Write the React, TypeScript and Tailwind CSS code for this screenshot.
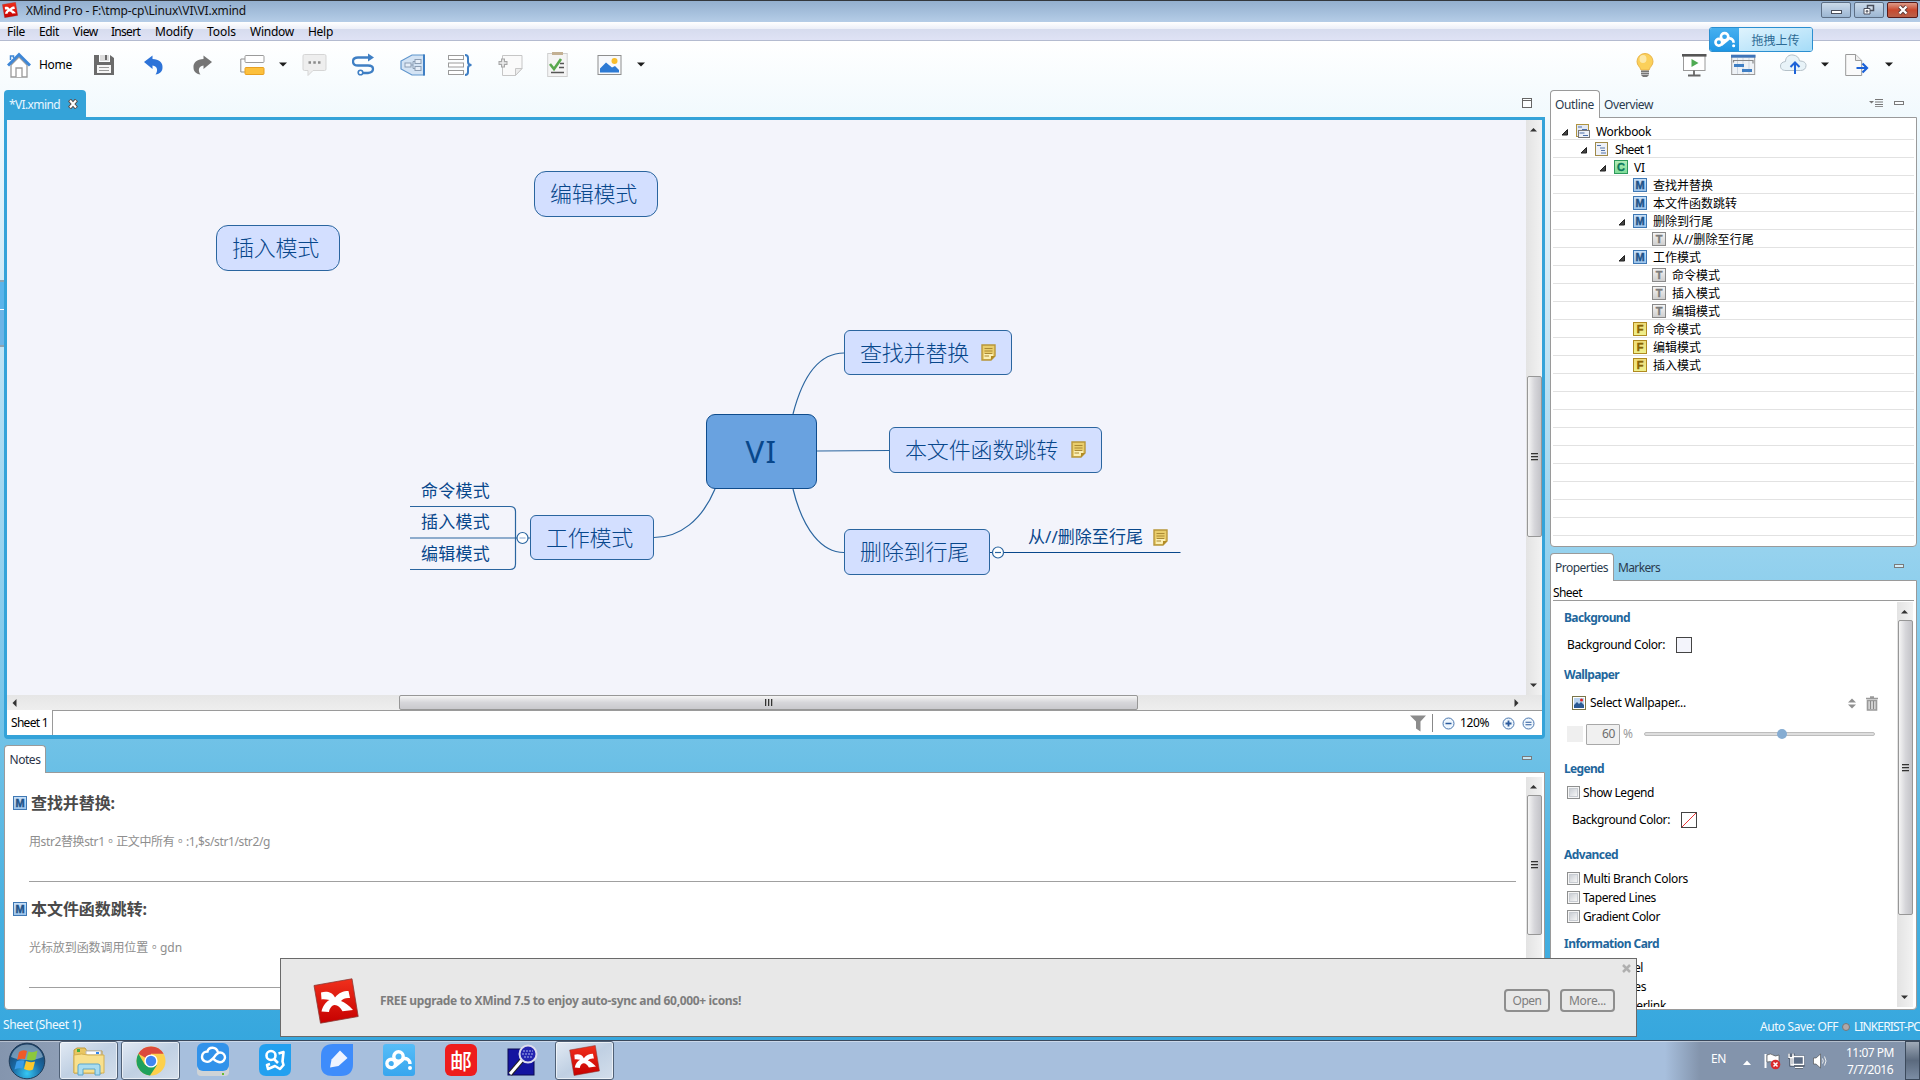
import React, { useLayoutEffect, useRef, useState } from 'react';

/* Text set to a given width: the letter spacing follows from the measured natural width. */
function Fit({ w, children, className = '' }: { w: number; children: string; className?: string }) {
  const ref = useRef<HTMLSpanElement>(null);
  const [spacing, setSpacing] = useState(0);
  useLayoutEffect(() => {
    if (ref.current) {
      const natural = ref.current.getBoundingClientRect().width;
      setSpacing((w - natural) / children.length);
    }
  }, [w, children]);
  return (
    <span ref={ref} className={`inline-block shrink-0 whitespace-pre ${className}`} style={{ letterSpacing: `${spacing}px` }}>
      {children}
    </span>
  );
}

function XMindLogo({ size }: { size: number }) {
  return (
    <svg width={size} height={size} viewBox="0 0 46 46" className="shrink-0">
      <defs>
        <linearGradient id="xm" x1="0" y1="0" x2="0" y2="1">
          <stop offset="0" stopColor="#f0301c" />
          <stop offset="1" stopColor="#c60000" />
        </linearGradient>
      </defs>
      <path d="M1 7.500L39 .8 45.200 38.500 7.500 45.200z" fill="url(#xm)" stroke="#8a3a35" strokeWidth=".8" />
      <path d="M8 14.500c5-1.500 11-1 14 5 4-5 8-6.500 13.500-6.500l1.500 7c-4-.5-7 .5-9 3 3.500 1 8 4.500 12 9l-10.500 1.300c-2-4-5-6.500-8-6.300-3 .5-5 3.500-5.500 7l-7.500-.5c1-5 4-9.500 8-11.500-3-.5-6-1-8-.5z" fill="#fff" />
    </svg>
  );
}

function Marker({ kind }: { kind: string }) {
  const look: Record<string, string> = {
    C: 'border-[#2e9a5c] from-[#b4ecb8] to-[#7fdc98] text-[#0c7a5c]',
    M: 'border-[#3f78b4] from-[#c8e0f8] to-[#9cc4ec] text-[#1f5288]',
    T: 'border-[#8a8a8a] from-[#f4f4f4] to-[#cfcfcf] text-[#7c7c7c]',
    F: 'border-[#b08a20] from-[#f0dc78] to-[#eef08c] text-[#8a6400]',
  };
  return (
    <span className={`flex h-[14px] w-[14px] shrink-0 items-center justify-center border bg-gradient-to-b font-['Liberation_Sans'] text-[11px] leading-[12px] font-bold [-webkit-text-stroke:0.4px_currentColor] ${look[kind]}`}>
      {kind}
    </span>
  );
}

function Caret({ className = '' }: { className?: string }) {
  return (
    <svg width="8" height="5" viewBox="0 0 8 5" className={`shrink-0 ${className}`}>
      <path d="M0 .5h8L4 4.500z" fill="#1c1c1c" />
    </svg>
  );
}

function MinBox() {
  return <span className="h-[4px] w-[10px] shrink-0 border border-[#7a7a7a] bg-white/60" />;
}

function VScroll({ top, thumb, bottomArrow = true }: { top: string; thumb: string; bottomArrow?: boolean }) {
  return (
    <div className="flex w-[16px] shrink-0 flex-col items-center bg-gradient-to-r from-[#e3e3e3] to-[#f2f2f2]">
      <div className={`flex shrink-0 items-center justify-center ${top}`}>
        <svg width="8" height="5" className="mt-[7px] mb-auto"><path d="M0 4.500h7L3.500 1z" fill="#333" /></svg>
      </div>
      <div className={`flex w-[15px] shrink-0 flex-col items-center justify-center gap-[1px] rounded-[2px] border border-[#979797] bg-gradient-to-r from-[#f5f5f5] via-[#d6d6da] to-[#c3c3c8] ${thumb}`}>
        <i className="h-[2px] w-[7px] border-t border-[#333] bg-[#aaa]" />
        <i className="h-[2px] w-[7px] border-t border-[#333] bg-[#aaa]" />
        <i className="h-[2px] w-[7px] border-t border-[#333] bg-[#aaa]" />
      </div>
      {bottomArrow && (
        <svg width="8" height="5" className="mt-auto mb-[7px]"><path d="M0 .5h7L3.500 4z" fill="#333" /></svg>
      )}
    </div>
  );
}

function NoteIcon() {
  return (
    <svg width="15" height="17" viewBox="0 0 15 17" className="shrink-0">
      <path d="M1 1h13v11l-4 4H1z" fill="#e9cd6c" stroke="#b8963a" strokeWidth="1.400" />
      <path d="M3 9h9v3l-3 3H3z" fill="#fbefb4" />
      <path d="M3.500 4.500h8M3.500 7h8M3.500 9.500h8M3.500 12H8" stroke="#ab8a35" strokeWidth="1" />
      <path d="M10 16v-4h4z" fill="#b18a24" />
    </svg>
  );
}

const menus: [string, number, string][] = [
  ['File', 18, 'ml-[7px]'],
  ['Edit', 20, 'ml-[14px]'],
  ['View', 25, 'ml-[14px]'],
  ['Insert', 29, 'ml-[13px]'],
  ['Modify', 38, 'ml-[15px]'],
  ['Tools', 29, 'ml-[14px]'],
  ['Window', 44, 'ml-[14px]'],
  ['Help', 25, 'ml-[14px]'],
];

function TitleBar() {
  const btn = 'flex h-[16px] items-center justify-center rounded-[2px] border';
  return (
    <header className="flex h-[22px] shrink-0 border-t border-[#33373d] bg-gradient-to-b from-[#93afcf] to-[#b5cde7]">
      <div className="mt-[1px] ml-[2px]"><XMindLogo size={16} /></div>
      <div className="ml-[8px] text-[12px] leading-[20px] text-[#111]"><Fit w={220}>{'XMind Pro - F:\\tmp-cp\\Linux\\VI\\VI.xmind'}</Fit></div>
      <div className="mt-[1px] mr-[2px] ml-auto flex gap-[3px]">
        <div className={`${btn} w-[30px] border-[#5d6f86] bg-gradient-to-b from-[#cbdaea] via-[#b3c8df] to-[#9cb6d2]`}>
          <span className="mt-[4px] h-[4px] w-[11px] border border-[#4a4f5c] bg-white" />
        </div>
        <div className={`${btn} w-[30px] border-[#5d6f86] bg-gradient-to-b from-[#cbdaea] via-[#b3c8df] to-[#9cb6d2]`}>
          <svg width="12" height="12"><path d="M4.500 1.500h6v5h-6z" fill="#cfdbe9" stroke="#4a4f5c" strokeWidth="1.500" /><path d="M1 4.500h6v5.500H1zM3.200 6.700h1.600v1.300H3.200z" fill="#fff" stroke="#4a4f5c" /></svg>
        </div>
        <div className={`${btn} w-[31px] border-[#5a1a18] bg-gradient-to-b from-[#dc9a88] via-[#c8482e] to-[#b8604a]`}>
          <svg width="12" height="10"><path d="M2.500 1.500l7 7M9.500 1.500l-7 7" stroke="#5a3a3a" strokeWidth="4" /><path d="M2.500 1.500l7 7M9.500 1.500l-7 7" stroke="#fff" strokeWidth="2.300" /></svg>
        </div>
      </div>
    </header>
  );
}

function Toolbar() {
  return (
    <div className="flex h-[49px] shrink-0 items-center pb-[2px]">
      <svg className="ml-[7px] shrink-0" width="24" height="26">
        <path d="M4 13v12h16V13l-8-8z" fill="#fff" stroke="#9a9a9a" strokeWidth="1.300" />
        <path d="M9 25v-9h6v9" fill="#fff" stroke="#9a9a9a" strokeWidth="1.300" />
        <path d="M1 13.500L12 2.500l11 11" fill="none" stroke="#3d86d6" strokeWidth="3" />
        <path d="M3.500 8V4h3v2" fill="none" stroke="#3d86d6" strokeWidth="1.500" />
      </svg>
      <Fit w={33} className="ml-[8px] text-[12px] text-black">Home</Fit>
      <svg className="ml-[21px] shrink-0" width="22" height="26">
        <path d="M1 3h5v7h11V3l4 3v17H1z" fill="#6b6b6b" />
        <path d="M7 3h9v6H7z" fill="#dcdcdc" /><path d="M12 3h2v5h-2z" fill="#6b6b6b" />
        <path d="M4 13h14v8H4z" fill="#f6f6f6" /><path d="M6 15.500h10M6 18.500h10" stroke="#999" />
      </svg>
      <svg className="ml-[29px] shrink-0" width="19" height="26">
        <path d="M0 10L8.500 3.500V7C15 7 19 11 18.500 15.500c0 4-2.500 6.500-7 7C14 19 14 14 8.500 13.500V17z" fill="#2d73d8" />
      </svg>
      <svg className="ml-[30px] shrink-0" width="19" height="26">
        <path d="M19 10L10.500 3.500V7C4 7 0 11 .5 15.500c0 4 2.500 6.500 7 7C5 19 5 14 10.500 13.500V17z" fill="#757575" />
      </svg>
      <svg className="ml-[28px] shrink-0" width="25" height="26">
        <path d="M5 7H.8v13H5" fill="none" stroke="#8e8e8e" />
        <rect x="5" y="3.500" width="19" height="7" rx="1" fill="#fff" stroke="#9b9b9b" />
        <rect x="5" y="15.500" width="19" height="7" rx="1" fill="#fcc03c" stroke="#e8a020" />
      </svg>
      <Caret className="ml-[14px]" />
      <svg className="ml-[15px] shrink-0" width="25" height="26">
        <path d="M2.500 2.500h20q1.500 0 1.500 1.500v13q0 1.500-1.500 1.500H11l-5 5v-5H2.500Q1 18.500 1 17V4q0-1.500 1.500-1.500z" fill="#eeeeee" stroke="#d5d5d5" />
        <path d="M6.500 10.500h2.500M11.300 10.500h2.500M16 10.500h2.500" stroke="#8a8a8a" strokeWidth="2.500" />
      </svg>
      <svg className="ml-[25px] shrink-0" width="23" height="26">
        <path d="M17 5.500H6q-5 0-5 4t5 4h10q5 0 5 3.500t-5 4h-5" fill="none" stroke="#3f7fc4" strokeWidth="2.300" />
        <path d="M16 1.500l6 4-6 4z" fill="#3f7fc4" /><circle cx="8.500" cy="20.500" r="2.300" fill="#fff" stroke="#3f7fc4" strokeWidth="1.600" />
      </svg>
      <svg className="ml-[25px] shrink-0" width="25" height="26">
        <path d="M24 3H12L1 9v8l11 6h12z" fill="#d3e3f4" stroke="#5f95cc" strokeWidth="1.200" /><path d="M24 2.500v21" stroke="#3f7fc4" strokeWidth="2" />
        <rect x="5" y="11" width="6" height="4" fill="#e6eef8" stroke="#8b9db3" /><rect x="15" y="7.500" width="6" height="4" fill="#e6eef8" stroke="#8b9db3" /><rect x="15" y="14.500" width="6" height="4" fill="#e6eef8" stroke="#8b9db3" /><path d="M11 13h2V9.500h2M13 13v3.500h2" fill="none" stroke="#8b9db3" />
      </svg>
      <svg className="ml-[22px] shrink-0" width="26" height="26">
        <g fill="#fff" stroke="#9b9b9b"><rect x="1.500" y="3.500" width="15" height="4" /><rect x="1.500" y="11" width="15" height="4" /><rect x="1.500" y="18.500" width="15" height="4" /></g>
        <path d="M18 3q3 0 3 3v4q0 3 3.500 3-3.500 0-3.500 3v4q0 3-3 3" fill="none" stroke="#3f7fc4" strokeWidth="2" />
      </svg>
      <svg className="ml-[25px] shrink-0" width="25" height="26">
        <path d="M4.500 3.500H24v13l-6.500 7h-13z" fill="#fafafa" stroke="#c6c6c6" /><path d="M17.500 23.500v-7H24z" fill="#ececec" stroke="#c6c6c6" />
        <path d="M5 6.500v9M.5 11h9" stroke="#a6a6a6" strokeWidth="4" /><path d="M5 7.500v7M1.500 11h7" stroke="#efefef" strokeWidth="1.600" />
      </svg>
      <svg className="ml-[24px] shrink-0" width="21" height="26">
        <rect x=".7" y="1.500" width="19.500" height="23" fill="#f4f4f4" stroke="#cfcfcf" /><rect x="5" y="0" width="11" height="3" fill="#c3b093" />
        <path d="M3 12l4 5 7-10" fill="none" stroke="#59a84e" strokeWidth="2.600" /><path d="M13 11.500h4M12 15.500h5M4 20.500h13" stroke="#555" strokeWidth="1.300" />
      </svg>
      <svg className="ml-[29px] shrink-0" width="25" height="26">
        <rect x="1" y="3.500" width="23" height="19" fill="#f7f9fc" stroke="#8e8e8e" /><path d="M3 20.500v-4l6-6 6 5 3-1.500 4 4v2.500z" fill="#2d7ad4" /><circle cx="17.500" cy="9" r="3" fill="#f8bd2c" />
      </svg>
      <Caret className="ml-[15px]" />

      <div className="mr-[27px] ml-auto flex items-center">
        <svg className="shrink-0" width="18" height="26">
          <path d="M9 1.500a8 8 0 0 1 8 8c0 4-3 5-4 8.500H5c-1-3.500-4-4.500-4-8.500a8 8 0 0 1 8-8z" fill="#fbd05a" stroke="#eab54a" /><ellipse cx="7" cy="7" rx="3.500" ry="4" fill="#fdeebb" opacity=".8" />
          <path d="M5 18.500h8v4.500l-2 2H7l-2-2z" fill="#777" /><path d="M5 20.500h8M5 22.500h8" stroke="#ddd" strokeWidth=".7" />
        </svg>
        <svg className="ml-[28px] shrink-0" width="25" height="26">
          <rect x="1.500" y="3" width="21.500" height="15.500" fill="#fff" stroke="#9a9a9a" /><path d="M0 3.300h24.500" stroke="#555" strokeWidth="2.600" /><path d="M9.500 7l7 4-7 4z" fill="#4fab52" /><path d="M12 18.500v4M6 23.500h12.500" stroke="#666" strokeWidth="1.800" />
        </svg>
        <svg className="ml-[24px] shrink-0" width="25" height="26">
          <rect x=".7" y="3.500" width="23" height="19" fill="#eef2f6" stroke="#9a9a9a" /><path d="M6.500 6v16M12 6v16M18 6v16" stroke="#cdd5df" /><path d="M0 4.200h24.500" stroke="#3f74b8" strokeWidth="3" /><path d="M2 8.500h20v3M2.500 8.500v2" fill="none" stroke="#888" strokeWidth="1.200" /><path d="M3 13.500h10M11 18.500h10" stroke="#3f7fc4" strokeWidth="3" />
        </svg>
        <svg className="ml-[24px] shrink-0" width="27" height="26">
          <path d="M6 18.500c-4 0-5.500-2-5.500-4.500S2 10 5.500 9.500C5.500 5 9 2.500 13 3s6 2.500 6.500 6c4 0 6.500 1.500 6.500 4.500s-2 5-5.500 5z" fill="#e8f3f8" stroke="#b4c0c8" /><path d="M15 22V11.500M10.500 15L15 10.500l4.500 4.500" stroke="#1c62d8" strokeWidth="2" fill="none" />
        </svg>
        <Caret className="ml-[14px]" />
        <svg className="ml-[16px] shrink-0" width="24" height="26">
          <path d="M.7 2.500h10l6 6v15h-16z" fill="#fafafa" stroke="#9a9a9a" /><path d="M10.500 2.500v6h6" fill="#eee" stroke="#9a9a9a" /><path d="M11.500 16h10M17.500 11.500L22 16l-4.500 4.500" fill="none" stroke="#1c62d8" strokeWidth="2.200" />
        </svg>
        <Caret className="ml-[16px]" />
      </div>
    </div>
  );
}

const boxed = 'absolute flex items-center border border-[#2a659f] bg-[#d3dfff] pl-[15px] pb-[1px] text-[22px]';

function MindMap() {
  return (
    <div className="relative h-[575px] w-[1519px] shrink-0 overflow-hidden bg-[#f3f4fb] text-[#08478b]">
      <svg className="absolute inset-0" width="1519" height="575" viewBox="7 120 1519 575" fill="none" stroke="#2a659f" strokeWidth="1.200">
        <path d="M844 353C820 353 803 375 793 414M817 451L889 450.500M793 489C803 530 822 552.500 844 552.500M715 489C702 520 680 537.500 654 537.500" />
        <path d="M410 506.500H510Q515.500 506.500 515.500 511.500V564Q515.500 569.500 510 569.500H410M410 538H531" />
        <path d="M990 552.500H1180.500" stroke="#08478b" />
        <circle cx="522.500" cy="538" r="5.500" fill="#fff" /><path d="M519.500 538h6" stroke="#9db6d8" />
        <circle cx="998" cy="552.500" r="5.500" fill="#fff" /><path d="M995 552.500h6" />
      </svg>
      <div className={`${boxed} top-[51px] left-[527px] h-[46px] w-[124px] rounded-[12px]`}><Fit w={87} className="font-light">编辑模式</Fit></div>
      <div className={`${boxed} top-[105px] left-[209px] h-[46px] w-[124px] rounded-[12px]`}><Fit w={87} className="font-light">插入模式</Fit></div>
      <div className={`${boxed} top-[210px] left-[837px] h-[45px] w-[168px] rounded-[6px]`}>
        <Fit w={109} className="font-light">查找并替换</Fit><span className="ml-[12px]"><NoteIcon /></span>
      </div>
      <div className={`${boxed} top-[307px] left-[882px] h-[46px] w-[213px] rounded-[6px]`}>
        <Fit w={153} className="font-light">本文件函数跳转</Fit><span className="ml-[13px]"><NoteIcon /></span>
      </div>
      <div className={`${boxed} top-[409px] left-[837px] h-[46px] w-[146px] rounded-[6px]`}><Fit w={109} className="font-light">删除到行尾</Fit></div>
      <div className={`${boxed} top-[395px] left-[523px] h-[45px] w-[124px] rounded-[6px]`}><Fit w={87} className="font-light">工作模式</Fit></div>
      <div className="absolute top-[294px] left-[699px] flex h-[75px] w-[111px] items-center justify-center rounded-[9px] border border-[#0f4c8c] bg-[#69a2e0] pb-[1px] text-[31px]"><Fit w={32}>VI</Fit></div>
      <div className="absolute top-[358px] left-[414px] text-[17px] leading-[26px]"><Fit w={69}>命令模式</Fit></div>
      <div className="absolute top-[389px] left-[414px] text-[17px] leading-[26px]"><Fit w={69}>插入模式</Fit></div>
      <div className="absolute top-[421px] left-[414px] text-[17px] leading-[26px]"><Fit w={69}>编辑模式</Fit></div>
      <div className="absolute top-[404px] left-[1021px] flex items-center text-[17px] leading-[26px]">
        <Fit w={115}>从//删除至行尾</Fit><span className="ml-[10px]"><NoteIcon /></span>
      </div>
    </div>
  );
}

function Editor() {
  return (
    <section className="flex h-[649px] w-[1541px] shrink-0 flex-col">
      <div className="flex h-[27px] shrink-0">
        <div className="flex w-[82px] items-center rounded-t-[4px] bg-[#34a3d9] pt-[2px] pl-[5px] text-[12px] text-[#e8f6ff]">
          <Fit w={51}>*VI.xmind</Fit>
          <svg className="mb-[2px] ml-[8px]" width="10" height="10"><path d="M1.500 1l7 8M8.500 1l-7 8" stroke="#5b4a45" strokeWidth="4" /><path d="M2 1.500l6 7M8 1.500l-6 7" stroke="#fff" strokeWidth="2" /></svg>
        </div>
        <span className="mt-[8px] mr-[13px] ml-auto h-[10px] w-[10px] border border-[#666] bg-white/70"><i className="mt-[1px] block h-px bg-[#666]" /></span>
      </div>
      <div className="flex h-[622px] flex-col overflow-hidden rounded-b-[4px] border-[3px] border-b-4 border-[#34a3d9] bg-white">
        <div className="flex h-[575px] shrink-0">
          <MindMap />
          <VScroll top="h-[256px]" thumb="h-[161px]" />
        </div>
        <div className="flex h-[15px] shrink-0 items-center bg-gradient-to-b from-[#e6e6e6] to-[#eeeeee]">
          <svg width="5" height="8" className="ml-[5px]"><path d="M4.500 0v8L.5 4z" fill="#333" /></svg>
          <div className="ml-[382px] flex h-[15px] w-[739px] items-center justify-center gap-[1px] rounded-[2px] border border-[#979797] bg-gradient-to-b from-[#f5f5f5] via-[#d6d6da] to-[#c9c9cd]">
            <i className="h-[7px] w-[2px] border-l border-[#333] bg-[#aaa]" /><i className="h-[7px] w-[2px] border-l border-[#333] bg-[#aaa]" /><i className="h-[7px] w-[2px] border-l border-[#333] bg-[#aaa]" />
          </div>
          <svg width="5" height="8" className="mr-[23px] ml-auto"><path d="M.5 0v8l4-4z" fill="#333" /></svg>
        </div>
        <div className="flex flex-1">
          <div className="flex w-[46px] items-center border-r border-[#9a9a9a] pl-[4px] text-[12px] text-black"><Fit w={37}>Sheet 1</Fit></div>
          <div className="flex flex-1 items-center border-t border-[#9a9a9a] text-[12px] text-black">
            <svg width="16" height="17" className="ml-auto"><path d="M0 .5h16l-5.500 6v10L6 13.500v-7z" fill="#8c8c8c" /></svg>
            <span className="ml-[6px] h-[18px] w-px bg-[#888]" />
            <svg width="13" height="13" className="ml-[9px]"><circle cx="6.500" cy="6.500" r="5.500" fill="#eef6fd" stroke="#4a76ae" /><path d="M3.500 6.500h6" stroke="#2b5a9c" strokeWidth="1.500" /></svg>
            <Fit w={29} className="ml-[5px]">120%</Fit>
            <svg width="13" height="13" className="ml-[13px]"><circle cx="6.500" cy="6.500" r="5.500" fill="#eef6fd" stroke="#4a76ae" /><path d="M3.500 6.500h6M6.500 3.500v6" stroke="#2b5a9c" strokeWidth="1.800" /></svg>
            <svg width="13" height="13" className="mr-[7px] ml-[7px]"><circle cx="6.500" cy="6.500" r="5.500" fill="#eef6fd" stroke="#4a76ae" /><path d="M3.500 5.200h6M3.500 7.800h6" stroke="#2b5a9c" strokeWidth="1.100" /></svg>
          </div>
        </div>
      </div>
    </section>
  );
}

function Note({ title, tw, text, w }: { title: string; tw: number; text: string; w: number }) {
  return (
    <div className="h-[106px] shrink-0">
      <div className="flex h-[14px] items-center pl-[8px] text-[16px] font-bold text-[#4a4a4a]"><Marker kind="M" /><Fit w={tw} className="ml-[4px]">{title}</Fit></div>
      <div className="mt-[22px] ml-[24px] h-[50px] border-b border-[#a0a0a0] pt-[1px] font-['Noto_Sans','Noto_Sans_CJK_TC',sans-serif] text-[12px] leading-[18px] text-[#8e8e8e]"><Fit w={w}>{text}</Fit></div>
    </div>
  );
}

function Notes() {
  return (
    <section className="mt-[6px] flex h-[265px] w-[1541px] shrink-0 flex-col">
      <div className="relative z-10 -mb-px flex h-[28px] shrink-0">
        <div className="flex w-[42px] items-center justify-center rounded-t-[4px] border border-b-0 border-[#9a9a9a] bg-white text-[12px] text-[#2b3448]"><Fit w={31}>Notes</Fit></div>
        <span className="mt-[11px] mr-[13px] ml-auto flex h-[4px]"><MinBox /></span>
      </div>
      <div className="flex h-[238px] rounded-b-[4px] border border-[#9a9a9a] bg-white">
        <div className="flex w-[1511px] flex-col pt-[23px]">
          <Note title="查找并替换:" tw={84} text="用str2替换str1。正文中所有。:1,$s/str1/str2/g" w={241} />
          <Note title="本文件函数跳转:" tw={116} text="光标放到函数调用位置。gdn" w={153} />
        </div>
        <div className="mt-[4px] mb-[3px] ml-[10px] flex"><VScroll top="h-[18px]" thumb="h-[140px]" /></div>
      </div>
    </section>
  );
}

function WorkbookIcon({ sheet = false }: { sheet?: boolean }) {
  return sheet ? (
    <svg width="13" height="14" className="shrink-0"><rect x=".5" y=".5" width="12" height="13" fill="#eef1f8" stroke="#a08a4a" /><path d="M2 3.500h4M5 6h5M6 8.500h4M6 11h5" stroke="#5574a8" strokeWidth="1" /></svg>
  ) : (
    <svg width="14" height="14" className="shrink-0"><rect x=".5" y=".5" width="12" height="12" fill="#e3e9f4" stroke="#b09440" /><rect x="2.500" y="6.500" width="11" height="7" fill="#eef1f8" stroke="#777" /><path d="M2 3h4M6 5.500h5M3.500 9h5M7 11.500h5" stroke="#4a6ea8" strokeWidth="1.200" /></svg>
  );
}

type Row = { pad: string; open?: boolean; icon: string; label: string; w: number };
const rows: Row[] = [
  { pad: 'pl-[8px]', open: true, icon: 'book', label: 'Workbook', w: 55 },
  { pad: 'pl-[27px]', open: true, icon: 'sheet', label: 'Sheet 1', w: 37 },
  { pad: 'pl-[46px]', open: true, icon: 'C', label: 'VI', w: 11 },
  { pad: 'pl-[65px]', icon: 'M', label: '查找并替换', w: 60 },
  { pad: 'pl-[65px]', icon: 'M', label: '本文件函数跳转', w: 84 },
  { pad: 'pl-[65px]', open: true, icon: 'M', label: '删除到行尾', w: 60 },
  { pad: 'pl-[84px]', icon: 'T', label: '从//删除至行尾', w: 82 },
  { pad: 'pl-[65px]', open: true, icon: 'M', label: '工作模式', w: 48 },
  { pad: 'pl-[84px]', icon: 'T', label: '命令模式', w: 48 },
  { pad: 'pl-[84px]', icon: 'T', label: '插入模式', w: 48 },
  { pad: 'pl-[84px]', icon: 'T', label: '编辑模式', w: 48 },
  { pad: 'pl-[65px]', icon: 'F', label: '命令模式', w: 48 },
  { pad: 'pl-[65px]', icon: 'F', label: '编辑模式', w: 48 },
  { pad: 'pl-[65px]', icon: 'F', label: '插入模式', w: 48 },
];

function Outline() {
  return (
    <section className="flex h-[457px] w-[367px] shrink-0 flex-col">
      <div className="relative z-10 -mb-px flex h-[28px] shrink-0 text-[12px] text-[#2b3b4e]">
        <div className="flex w-[50px] items-center rounded-t-[4px] border border-b-0 border-[#9a9a9a] bg-white pt-[1px] pl-[4px]"><Fit w={39}>Outline</Fit></div>
        <span className="mt-[6px] ml-[4px]"><Fit w={49}>Overview</Fit></span>
        <svg width="14" height="8" className="mt-[9px] ml-auto"><path d="M0 2h5L2.500 4.500z" fill="#777" /><path d="M6 .5h8M6 3h8M6 5.500h8M6 7.700h8" stroke="#777" /></svg>
        <span className="mt-[11px] mr-[13px] ml-[11px] flex h-[4px]"><MinBox /></span>
      </div>
      <div className="h-[430px] overflow-hidden rounded-b-[4px] border border-[#9a9a9a] bg-white px-[2px] pt-[4px]">
        {Array.from({ length: 23 }, (_, i) => {
          const r = rows[i];
          return (
            <div key={i} className={`flex h-[18px] items-center border-b border-[#e2e2e2] text-[12px] leading-[17px] text-black ${r ? r.pad : ''}`}>
              {r && (
                <>
                  <svg width="8" height="8" className="mt-[2px] shrink-0">{r.open && <path d="M6.500 1.500v5.500H1z" fill="#444" stroke="#222" />}</svg>
                  <span className="mt-[1px] mr-[6px] ml-[7px] flex w-[14px]">
                    {r.icon === 'book' ? <WorkbookIcon /> : r.icon === 'sheet' ? <WorkbookIcon sheet /> : <Marker kind={r.icon} />}
                  </span>
                  <Fit w={r.w} className="mt-[1px]">{r.label}</Fit>
                </>
              )}
            </div>
          );
        })}
      </div>
    </section>
  );
}

function Heading({ w, children, className = '' }: { w: number; children: string; className?: string }) {
  return <div className={`ml-[11px] h-[18px] shrink-0 leading-[18px] font-bold text-[#22669c] ${className}`}><Fit w={w}>{children}</Fit></div>;
}

function Check({ w, children, className = '' }: { w: number; children: string; className?: string }) {
  return (
    <div className={`ml-[14px] flex h-[18px] shrink-0 items-center leading-[18px] ${className}`}>
      <span className="mr-[3px] mb-[2px] flex h-[13px] w-[13px] border border-[#8e8f8f] bg-[#f6f6f6] p-[1px]"><i className="flex-1 border border-[#c8ccd2] bg-gradient-to-br from-[#cbcfd5] to-[#f6f6f6]" /></span>
      <Fit w={w}>{children}</Fit>
    </div>
  );
}

function Properties() {
  return (
    <section className="mt-[6px] flex h-[457px] w-[367px] shrink-0 flex-col text-[12px] text-black">
      <div className="relative z-10 -mb-px flex h-[28px] shrink-0 text-[#2b3b4e]">
        <div className="flex w-[64px] items-center rounded-t-[4px] border border-b-0 border-[#9a9a9a] bg-white pt-[1px] pl-[4px]"><Fit w={53}>Properties</Fit></div>
        <span className="mt-[6px] ml-[4px]"><Fit w={42}>Markers</Fit></span>
        <span className="mt-[11px] mr-[13px] ml-auto flex h-[4px]"><MinBox /></span>
      </div>
      <div className="flex h-[430px] flex-col rounded-b-[4px] border border-[#9a9a9a] bg-white px-[2px] pb-[2px]">
        <div className="flex h-[20px] shrink-0 items-center border-b border-[#9a9a9a] pt-[5px] leading-[16px]"><Fit w={29}>Sheet</Fit></div>
        <div className="flex min-h-0 flex-1">
          <div className="flex w-[344px] flex-col overflow-hidden">
            <Heading w={66} className="mt-[8px]">Background</Heading>
            <div className="mt-[6px] ml-[14px] flex h-[24px] shrink-0 items-center"><Fit w={98}>Background Color:</Fit><span className="ml-[11px] h-[16px] w-[16px] border border-[#444] bg-[#f3f4fb]" /></div>
            <Heading w={55} className="mt-[9px]">Wallpaper</Heading>
            <div className="mt-[10px] ml-[19px] flex h-[18px] shrink-0 items-center">
              <svg width="14" height="14"><rect x=".5" y=".5" width="13" height="13" fill="#fff" stroke="#7a7448" /><rect x="2" y="2" width="10" height="10" fill="#b9d3ee" /><path d="M2 12V9l3-3 2 2 2-2 3 3v3z" fill="#2b5a94" /><circle cx="9.500" cy="4" r="1.500" fill="#d22" /></svg>
              <Fit w={96} className="ml-[4px]">Select Wallpaper...</Fit>
              <svg width="8" height="11" className="ml-[162px]"><path d="M0 4.500L4 .5l4 4zM0 6.500l4 4 4-4z" fill="#8f8f8f" /></svg>
              <svg width="12" height="15" className="ml-[10px]"><path d="M0 2.500h12M4 1h4M1.500 4.500h9V14h-9z" stroke="#9a9a9a" strokeWidth="1.600" fill="#d2d2d2" /><path d="M4.500 5v8M7.500 5v8" stroke="#888" /></svg>
            </div>
            <div className="mt-[11px] ml-[14px] flex h-[22px] shrink-0 items-center text-[#6d6d6d]">
              <span className="h-[16px] w-[16px] bg-[#efefef]" />
              <span className="ml-[3px] flex h-[21px] w-[34px] items-center justify-end rounded-[1px] border border-[#a8a8a8] bg-[#f0f0f0] pr-[4px]"><Fit w={13}>60</Fit></span>
              <Fit w={11} className="ml-[3px] text-[#9a9a9a]">%</Fit>
              <span className="relative ml-[10px] h-[4px] w-[231px] rounded border border-[#bdbdbd] bg-[#dedede]"><i className="absolute -top-[4px] left-[132px] h-[10px] w-[10px] rounded-full bg-[#85acd2]" /></span>
            </div>
            <Heading w={40} className="mt-[15px]">Legend</Heading>
            <Check w={71} className="mt-[6px]">Show Legend</Check>
            <div className="mt-[6px] ml-[19px] flex h-[24px] shrink-0 items-center"><Fit w={98}>Background Color:</Fit>
              <svg width="16" height="16" className="ml-[11px]"><rect x=".5" y=".5" width="15" height="15" fill="#fff" stroke="#444" /><path d="M1 15L15 1" stroke="#e33" /></svg>
            </div>
            <Heading w={54} className="mt-[14px]">Advanced</Heading>
            <Check w={105} className="mt-[6px]">Multi Branch Colors</Check>
            <Check w={73} className="mt-[1px]">Tapered Lines</Check>
            <Check w={77} className="mt-[1px]">Gradient Color</Check>
            <Heading w={95} className="mt-[9px]">Information Card</Heading>
            <Check w={60} className="mt-[6px]">Show Label</Check>
            <Check w={63} className="mt-[1px]">Show Notes</Check>
            <Check w={83} className="mt-[1px]">Show Hyperlink</Check>
          </div>
          <div className="mt-[1px] flex"><VScroll top="h-[18px]" thumb="h-[295px]" /></div>
        </div>
      </div>
    </section>
  );
}

function PanCloud({ w, h }: { w: number; h: number }) {
  return (
    <svg width={w} height={h} viewBox="0 0 28 20" fill="none" stroke="#fff" strokeWidth="3.400">
      <circle cx="6.200" cy="13.500" r="4.300" /><path d="M9.500 16.500L18 9.500" /><circle cx="13.500" cy="6.500" r="4.700" /><path d="M17.500 9c4-1.500 7.500 1 7.500 5" /><circle cx="25" cy="18" r="1" strokeWidth="2" />
    </svg>
  );
}

function UploadBadge() {
  return (
    <div className="absolute top-[27px] left-[1709px] z-20 flex h-[25px] w-[104px] overflow-hidden rounded-[3px] border border-[#2b8fd0]">
      <div className="flex w-[29px] items-center justify-center bg-gradient-to-b from-[#46b0f0] to-[#1c96e4]"><PanCloud w={22} h={17} /></div>
      <div className="flex flex-1 items-center justify-center bg-gradient-to-br from-[#dff3fd] to-[#a5dcf8] pt-[2px] text-[12px] text-[#2c6a94]"><Fit w={48}>拖拽上传</Fit></div>
    </div>
  );
}

function UpgradePopup() {
  return (
    <div className="absolute top-[958px] left-[280px] z-20 flex h-[79px] w-[1357px] items-center border border-[#6a6a6a] bg-[#e8e8e8] text-[12px] text-[#7d7d7d]">
      <div className="mt-[7px] ml-[32px]"><XMindLogo size={46} /></div>
      <Fit w={361} className="mt-[6px] ml-[21px] font-bold">FREE upgrade to XMind 7.5 to enjoy auto-sync and 60,000+ icons!</Fit>
      <div className="mt-[6px] mr-[21px] ml-auto flex gap-[10px]">
        <div className="flex h-[23px] w-[46px] items-center justify-center rounded-[4px] border-2 border-[#8e8e8e]"><Fit w={29}>Open</Fit></div>
        <div className="flex h-[23px] w-[55px] items-center justify-center rounded-[4px] border-2 border-[#8e8e8e]"><Fit w={37}>More...</Fit></div>
      </div>
      <svg width="9" height="9" className="absolute top-[5px] right-[5px]"><path d="M1 1l7 7M8 1L1 8" stroke="#b0b0b0" strokeWidth="2.500" /></svg>
    </div>
  );
}

function Taskbar() {
  const active = 'flex h-[39px] w-[59px] shrink-0 items-center justify-center rounded-[3px] border border-[#4f6076] bg-gradient-to-br from-[#e2eaf4] via-[#c0d0e3] to-[#d3deeb] shadow-[inset_0_0_0_1px_rgba(255,255,255,0.6)]';
  return (
    <footer className="flex h-[40px] shrink-0 border-t border-[#39485c] bg-[linear-gradient(to_right,#8495ae_0,#8d9db5_56px,#a7bfdd_130px,#a7bfdd_1665px,#8394ac_1700px)] shadow-[inset_0_1px_0_rgba(255,255,255,0.4)]">
      <svg width="38" height="39" viewBox="0 0 38 39" className="ml-[8px] shrink-0">
        <defs><radialGradient id="orb" cx=".5" cy=".85" r=".8"><stop offset="0" stopColor="#35c8f4" /><stop offset=".5" stopColor="#1a6aa4" /><stop offset="1" stopColor="#1a3f66" /></radialGradient></defs>
        <circle cx="19" cy="20" r="17.800" fill="url(#orb)" stroke="#213c58" /><path d="M3 16a16.500 16.500 0 0 1 32 0c-8 4-24 4-32 0z" fill="#b8cfe2" opacity=".55" />
        <path d="M11 11q4-3 8-1l-2 8q-4-1-8 1z" fill="#f05a28" /><path d="M20.500 10.500q4 2 9-1l-2 9q-4 2-9 0z" fill="#8cc83c" /><path d="M8.500 20.500q4-2 8-1l-2 8q-4-1-8 1z" fill="#3a9ce8" /><path d="M18 20q4 2 9 .5l-2 8q-4 2-9-.5z" fill="#fcc82c" />
      </svg>
      <div className={`ml-[13px] ${active}`}>
        <svg width="34" height="30" viewBox="0 0 34 30"><path d="M2 4l3-2h8l2 3h15v22H2z" fill="#e9c662" stroke="#c09a3c" /><path d="M5 3h3v3H5z" fill="#3fae3f" /><path d="M14 5h15v4H14z" fill="#fff" stroke="#bbb" /><path d="M24 6h3v2h-3z" fill="#38e" /><path d="M2 9q8-2 14 0h16v18H2z" fill="#f8e08e" stroke="#d4b050" /><path d="M6 29v-9q0-2 2-2h18q2 0 2 2v9h-5v-6H11v6z" fill="#a9dcf0" stroke="#5aa5cc" /></svg>
      </div>
      <div className={`ml-[3px] ${active}`}>
        <svg width="30" height="30" viewBox="0 0 30 30"><circle cx="15" cy="15" r="14.500" fill="#fdd04c" /><path d="M15 15L2.400 7.800A14.500 14.500 0 0 1 27.600 7.800H15z" fill="#dc4a3c" /><path d="M8.800 18.500L2.400 7.800A14.500 14.500 0 0 0 14 29.500l7-10.500L15 21z" fill="#1fa15c" /><circle cx="15" cy="15" r="6.600" fill="#fff" /><circle cx="15" cy="15" r="5.200" fill="#4286f0" /></svg>
      </div>
      <svg width="32" height="34" className="mt-[2px] ml-[17px] shrink-0"><rect y="22" width="32" height="11" rx="4" fill="#cfd3d6" /><rect width="32" height="28" rx="6" fill="#3192ea" /><path d="M16 15.500l-3 2.500c-3 2-8 0-8-4s3-5.500 5.500-5.500C11.500 3.500 19.500 3 21 9.500M16 15.500c2.500-3 4-6 7-6s5 2.500 5 4.800-2 5-5 5-5-2-7-3.800z" fill="none" stroke="#fff" strokeWidth="2.400" /><path d="M25 31h2" stroke="#6b3" strokeWidth="2" /></svg>
      <svg width="32" height="32" className="mt-[3px] ml-[30px] shrink-0"><path d="M7 0h25v25q0 7-7 7H7q-7 0-7-7V7q0-7 7-7z" fill="#22a0f0" /><g fill="none" stroke="#fff" strokeWidth="2.600" strokeLinejoin="round"><circle cx="12" cy="11.500" r="4.500" /><path d="M15 15l4 4M19.500 9.500l5-1.500-1 9.500 1 3.500-3.500 4-5-3-7 3-1-4 3-1" /></g></svg>
      <svg width="32" height="32" className="mt-[3px] ml-[30px] shrink-0"><path d="M12 0h20v20q0 12-12 12H12Q0 32 0 22V12Q0 0 12 0z" fill="#3e8cfb" /><path d="M9 23.500l1.500-8L19 6.500l7.500 7.500-9 8z" fill="#eef4ff" /></svg>
      <div className="mt-[3px] ml-[30px] flex h-[32px] w-[32px] shrink-0 items-center justify-center rounded-[3px] bg-gradient-to-b from-[#56bdf8] to-[#37a6ee]"><PanCloud w={28} h={20} /></div>
      <div className="mt-[3px] ml-[30px] flex h-[32px] w-[32px] shrink-0 items-center justify-center rounded-[6px] bg-[#ee1c1c] text-[22px] leading-[30px] font-medium text-white">邮</div>
      <svg width="32" height="33" className="mt-[3px] ml-[30px] shrink-0"><rect x="1" y="5" width="26" height="26" fill="#1414a0" stroke="#0b0b50" /><path d="M3 30L15 16" stroke="#222" strokeWidth="5" /><path d="M3 30L15 16" stroke="#fff" strokeWidth="3" /><circle cx="21" cy="10" r="8.500" fill="#2424b0" stroke="#dde" strokeWidth="2" /><path d="M16 7h10M15 10h12M17 13h8" stroke="#aab4ee" strokeDasharray="2 1" /></svg>
      <div className={`ml-[16px] ${active}`}><XMindLogo size={31} /></div>

      <div className="ml-auto flex items-center text-[12px] text-white">
        <Fit w={15} className="mb-[4px]">EN</Fit>
        <svg width="8" height="5" className="mt-[3px] ml-[17px]"><path d="M0 5l4-4.500L8 5z" fill="#fff" /></svg>
        <svg width="17" height="17" className="mt-[2px] ml-[13px]"><path d="M1.500 1v14" stroke="#fff" strokeWidth="2" /><path d="M3 2q4-2 6 0t6 0v8q-4 1-6-.5T3 9z" fill="#fff" stroke="#555" strokeWidth=".7" /><circle cx="11.500" cy="11.500" r="4.800" fill="#d92b2b" /><path d="M9.500 9.500l4 4M13.500 9.500l-4 4" stroke="#fff" strokeWidth="1.500" /></svg>
        <svg width="17" height="16" className="mt-[1px] ml-[7px]"><path d="M5 4h10v8H5zM7 14.500h8M1 .5v4h4v-4M3 4v8h3" stroke="#333f50" strokeWidth="3" fill="none" /><rect x="5" y="3.500" width="10.500" height="8" fill="#5d6d85" stroke="#fff" strokeWidth="1.500" /><path d="M7 14.500h8M1 .5v4h4v-4M3 4v8h3" stroke="#fff" strokeWidth="1.500" fill="none" /></svg>
        <svg width="15" height="16" className="ml-[8px]"><path d="M.5 5H3l4.500-4v14L3 11H.5z" fill="#fff" stroke="#444" strokeWidth=".6" /><path d="M9.500 5.500q1.500 2.500 0 5M11.500 3.500q3 4.500 0 9" stroke="#eee" fill="none" /></svg>
        <div className="ml-[17px] flex w-[50px] flex-col items-center leading-[17px]"><Fit w={48}>11:07 PM</Fit><Fit w={46}>7/7/2016</Fit></div>
        <span className="ml-[10px] h-[39px] w-[15px] border border-[#3c4a5c] bg-gradient-to-b from-[#a0aab8] via-[#5b6a7e] to-[#7c8da4]" />
      </div>
    </footer>
  );
}

export default function App() {
  return (
    <div className="relative flex h-[1080px] w-[1920px] flex-col overflow-hidden bg-white font-['Noto_Sans','Noto_Sans_CJK_SC',sans-serif]">
      <TitleBar />
      <nav className="flex h-[19px] shrink-0 items-center border-b border-[#b4bbd0] bg-[linear-gradient(#fff_0,#eceff8_7px,#d6dcee_7px,#dfe2f5_18px)] pt-[2px] text-[12px] leading-[18px] text-black">
        {menus.map(([name, w, gap]) => <Fit key={name} w={w} className={gap}>{name}</Fit>)}
      </nav>
      <div className="flex h-[999px] shrink-0 flex-col bg-[linear-gradient(#ffffff_0,#f0f9fd_80px,#cbe8f6_260px,#96d2ee_510px,#6cc0e6_720px,#45afe0_880px,#36a7de_999px)]">
        <Toolbar />
        <div className="flex h-[919px] shrink-0">
          <div className="flex w-[4px] shrink-0 flex-col">
            <div className="mt-[190px] flex h-[67px] flex-col border-y-2 border-[#8fa3b0] bg-white"><i className="h-[28px] border-b border-white bg-[#5ab4ea]" /><i className="flex-1 bg-[#6cb4e6]" /></div>
          </div>
          <div className="flex flex-col"><Editor /><Notes /></div>
          <div className="ml-[5px] flex flex-col"><Outline /><Properties /></div>
        </div>
        <div className="flex h-[31px] items-center pl-[3px] text-[12px] text-[#f2faff]">
          <Fit w={78}>Sheet (Sheet 1)</Fit>
          <span className="mt-[4px] ml-auto flex items-center">
            <Fit w={78}>Auto Save: OFF</Fit>
            <i className="mr-[4px] ml-[4px] h-[8px] w-[8px] rounded-full border border-[#777] bg-[#b0a8a8]" />
            <Fit w={66}>LINKERIST-PC</Fit>
          </span>
        </div>
      </div>
      <Taskbar />
      <UploadBadge />
      <UpgradePopup />
    </div>
  );
}
